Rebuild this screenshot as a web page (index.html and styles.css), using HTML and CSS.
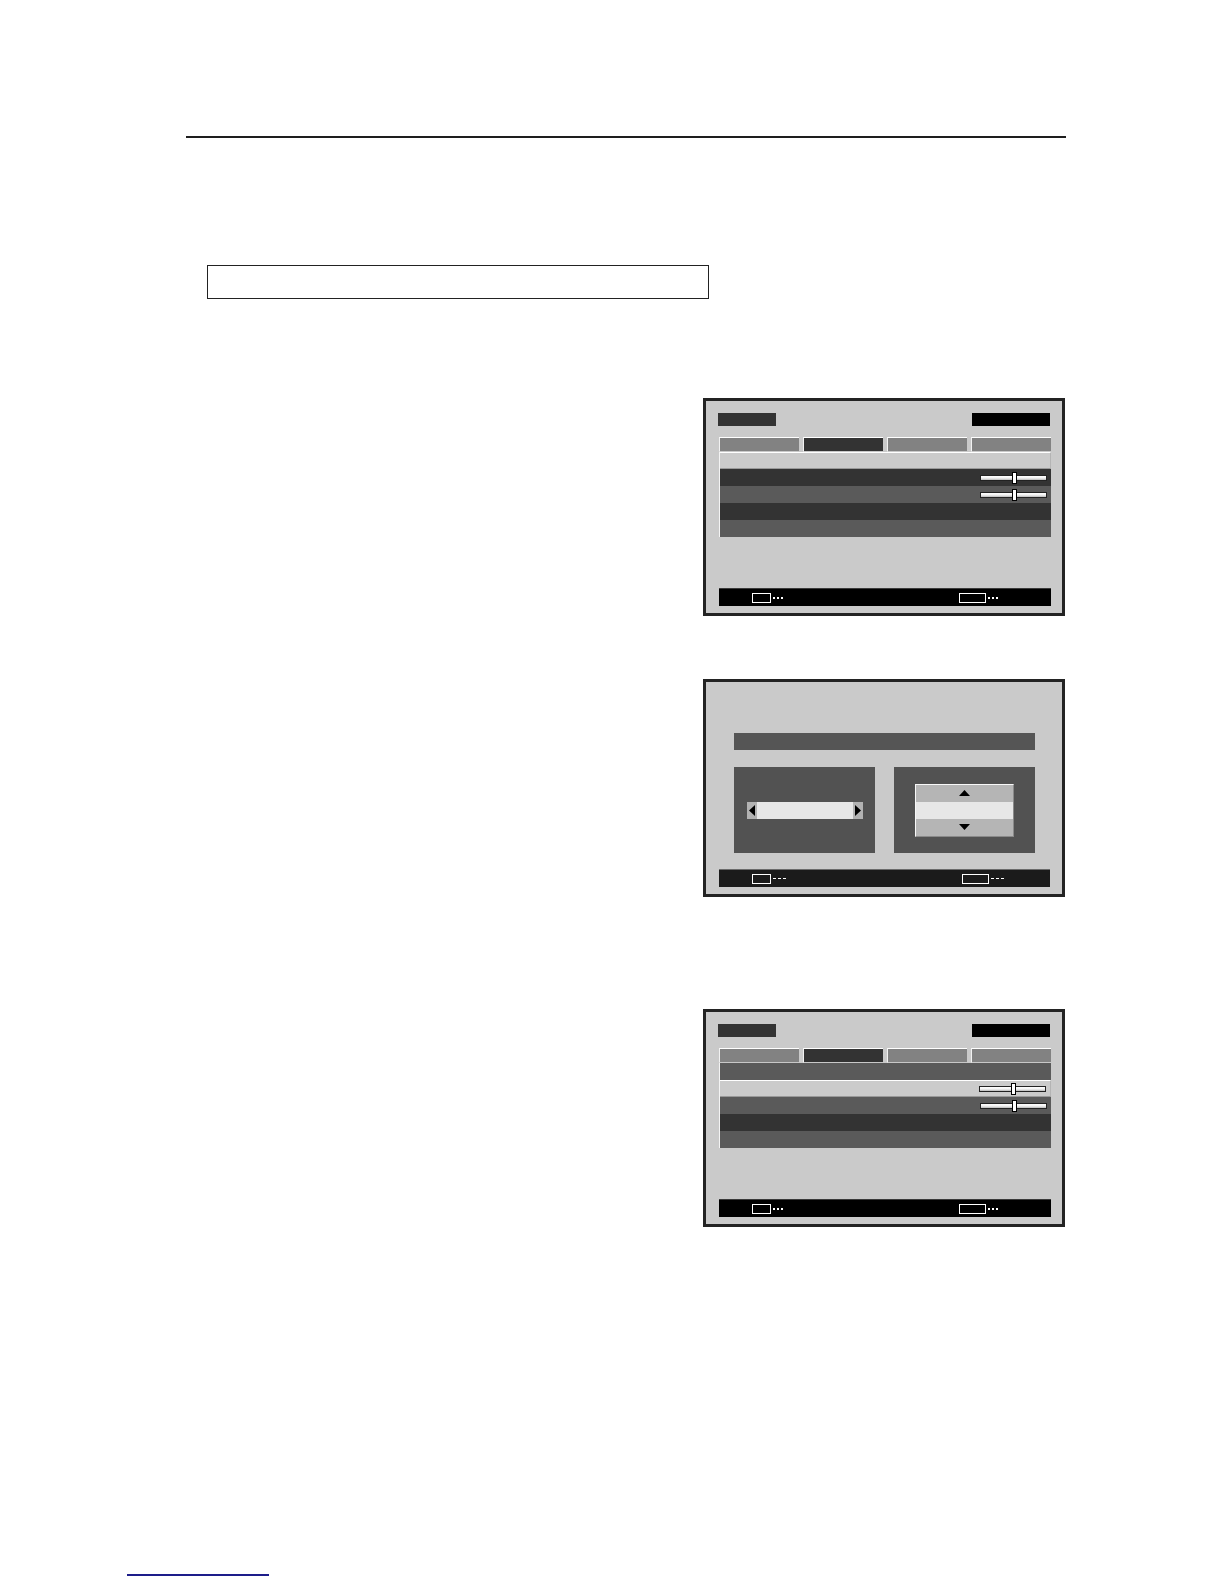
FILE: index.html
```html
<!DOCTYPE html>
<html lang="en">
<head>
<meta charset="utf-8">
<title>Manual page</title>
<link rel="stylesheet" href="styles.css">
</head>
<body>
<div class="page">
  <div class="rule"></div>
  <div class="note-box"></div>

  <div class="screen">
    <div class="head">
      <div class="head-left"></div>
      <div class="head-right"></div>
    </div>
    <div class="tabs">
      <div class="tab"></div>
      <div class="tab tab-active"></div>
      <div class="tab"></div>
      <div class="tab"></div>
    </div>
    <div class="rows">
      <div class="row row-light"></div>
      <div class="row row-dark"><div class="slider"><div class="knob"></div></div></div>
      <div class="row row-mid"><div class="slider"><div class="knob"></div></div></div>
      <div class="row row-dark"></div>
      <div class="row row-mid"></div>
    </div>
    <div class="footbar">
      <div class="key key-s"></div><div class="dots"><i></i><i></i><i></i></div>
      <div class="spacer"></div>
      <div class="key key-l"></div><div class="dots"><i></i><i></i><i></i></div>
      <div class="tail"></div>
    </div>
  </div>

  <div class="screen screen-dialog">
    <div class="dlg-title"></div>
    <div class="panels">
      <div class="panel">
        <div class="strip">
          <div class="arrow-box"><svg width="6" height="11" viewBox="0 0 6 11"><polygon points="6,0 0,5.5 6,11" fill="#000"/></svg></div>
          <div class="strip-mid"></div>
          <div class="arrow-box"><svg width="6" height="11" viewBox="0 0 6 11"><polygon points="0,0 6,5.5 0,11" fill="#000"/></svg></div>
        </div>
      </div>
      <div class="panel panel-center">
        <div class="spinner">
          <div class="spin-cell spin-gray"><svg width="11" height="6" viewBox="0 0 11 6"><polygon points="0,6 5.5,0 11,6" fill="#000"/></svg></div>
          <div class="spin-cell spin-light"></div>
          <div class="spin-cell spin-gray"><svg width="11" height="6" viewBox="0 0 11 6"><polygon points="0,0 11,0 5.5,6" fill="#000"/></svg></div>
        </div>
      </div>
    </div>
    <div class="footbar footbar-soft">
      <div class="key key-s"></div><div class="dots dashes"><i></i><i></i><i></i></div>
      <div class="spacer"></div>
      <div class="key key-l"></div><div class="dots dashes"><i></i><i></i><i></i></div>
      <div class="tail"></div>
    </div>
  </div>

  <div class="screen screen-third">
    <div class="head">
      <div class="head-left"></div>
      <div class="head-right"></div>
    </div>
    <div class="tabs">
      <div class="tab"></div>
      <div class="tab tab-active"></div>
      <div class="tab"></div>
      <div class="tab"></div>
    </div>
    <div class="rows">
      <div class="row row-mid"></div>
      <div class="row row-light"><div class="slider"><div class="knob"></div></div></div>
      <div class="row row-mid"><div class="slider"><div class="knob"></div></div></div>
      <div class="row row-dark"></div>
      <div class="row row-mid"></div>
    </div>
    <div class="footbar">
      <div class="key key-s"></div><div class="dots"><i></i><i></i><i></i></div>
      <div class="spacer"></div>
      <div class="key key-l"></div><div class="dots"><i></i><i></i><i></i></div>
      <div class="tail"></div>
    </div>
  </div>

  <div class="footer-link"></div>
</div>
</body>
</html>
```

FILE: styles.css
```css
* { box-sizing: border-box; }
html, body { margin: 0; padding: 0; background: #fff; }
body { font-family: "Liberation Sans", Arial, sans-serif; }

.page {
  width: 1224px;
  height: 1584px;
  padding-top: 136px;
  overflow: hidden;
}

.rule {
  margin-left: 186px;
  width: 880px;
  height: 2px;
  background: #1e1e1e;
}

.note-box {
  margin-top: 127px;
  margin-left: 207px;
  width: 502px;
  height: 34px;
  border: 1.5px solid #222;
}

.screen {
  margin-top: 99px;
  margin-left: 703px;
  width: 362px;
  height: 218px;
  border: 3px solid #232323;
  background: #cacaca;
  padding: 12px 11px 7px 12px;
  display: flex;
  flex-direction: column;
}

.screen-dialog { margin-top: 63px; }
.screen-third { margin-top: 112px; }

.head {
  display: flex;
  justify-content: space-between;
  height: 13px;
}
.head-left { width: 58px; background: #333; }
.head-right { width: 78px; margin-right: 1px; background: #000; }

.tabs {
  margin-top: 11px;
  display: grid;
  grid-template-columns: repeat(4, 1fr);
  gap: 4px;
  height: 15px;
  padding-left: 1px;
}
.tab {
  background: #828282;
  border-top: 1px solid #fff;
  border-left: 1px solid #f2f2f2;
  border-bottom: 1px solid #c8c8c8;
}
.tab-active { background: #333; }

.rows {
  display: flex;
  flex-direction: column;
  border-left: 1px solid #f4f4f4;
  margin-left: 1px;
}
.row {
  height: 17px;
  display: flex;
  align-items: center;
  justify-content: flex-end;
  padding-right: 4px;
}
.row-light {
  background: #cbcbcb;
  border-top: 1px solid #fff;
  border-bottom: 1px solid #999;
  border-right: 1px solid #b4b4b4;
}
.row-dark { background: #333; }
.row-mid { background: #5a5a5a; }

.slider {
  position: relative;
  width: 67px;
  height: 6px;
  background: linear-gradient(#ffffff, #f2f2f2 50%, #b9b9b9);
  border: 1px solid #222;
}
.knob {
  position: absolute;
  left: 31px;
  top: -4px;
  width: 5px;
  height: 12px;
  background: #fff;
  border: 1px solid #000;
}

.footbar {
  margin-top: auto;
  margin-left: 1px;
  height: 18px;
  background: #000;
  border-top: 1px solid #3a3a3a;
  display: flex;
  align-items: center;
  padding-left: 33px;
}
.footbar-soft { background: #1b1b1b; border-top-color: #6a6a6a; margin-left: 1px; margin-right: 1px; padding-top: 0; }
.key {
  height: 10px;
  border: 1px solid #fff;
}
.key-s { width: 19px; }
.key-l { width: 27px; }
.spacer { flex: 0 0 176px; }
.tail { flex: 1; }
.dots {
  display: flex;
  gap: 2px;
  margin-left: 2px;
}
.dots i {
  display: block;
  width: 2px;
  height: 2px;
  background: #fff;
}
.dashes i { width: 3px; height: 1px; }

/* dialog screen */
.dlg-title {
  margin: 39px 16px 0 16px;
  height: 17px;
  background: #555;
}
.panels {
  margin: 17px 16px 0 16px;
  display: flex;
  justify-content: space-between;
}
.panel {
  width: 141px;
  height: 86px;
  background: #525252;
  display: flex;
  align-items: center;
  padding: 0 12px 0 13px;
}
.panel-center {
  justify-content: center;
  padding: 0;
}
.strip {
  flex: 1;
  height: 17px;
  display: flex;
}
.arrow-box {
  width: 10px;
  background: #b2b2b2;
  display: flex;
  align-items: center;
  justify-content: center;
}
.strip-mid { flex: 1; background: #e7e7e7; }

.spinner {
  width: 99px;
  display: flex;
  flex-direction: column;
  border-top: 1px solid #f8f8f8;
  border-left: 1px solid #f8f8f8;
  border-right: 1px solid #8a8a8a;
  border-bottom: 1px solid #8a8a8a;
}
.spin-cell {
  height: 17px;
  display: flex;
  align-items: center;
  justify-content: center;
}
.spin-gray { background: #b5b5b5; }
.spin-light { background: #e7e7e7; }

.footer-link {
  margin-top: 347px;
  margin-left: 127px;
  width: 142px;
  height: 2px;
  background: #1d1d8a;
}
```
